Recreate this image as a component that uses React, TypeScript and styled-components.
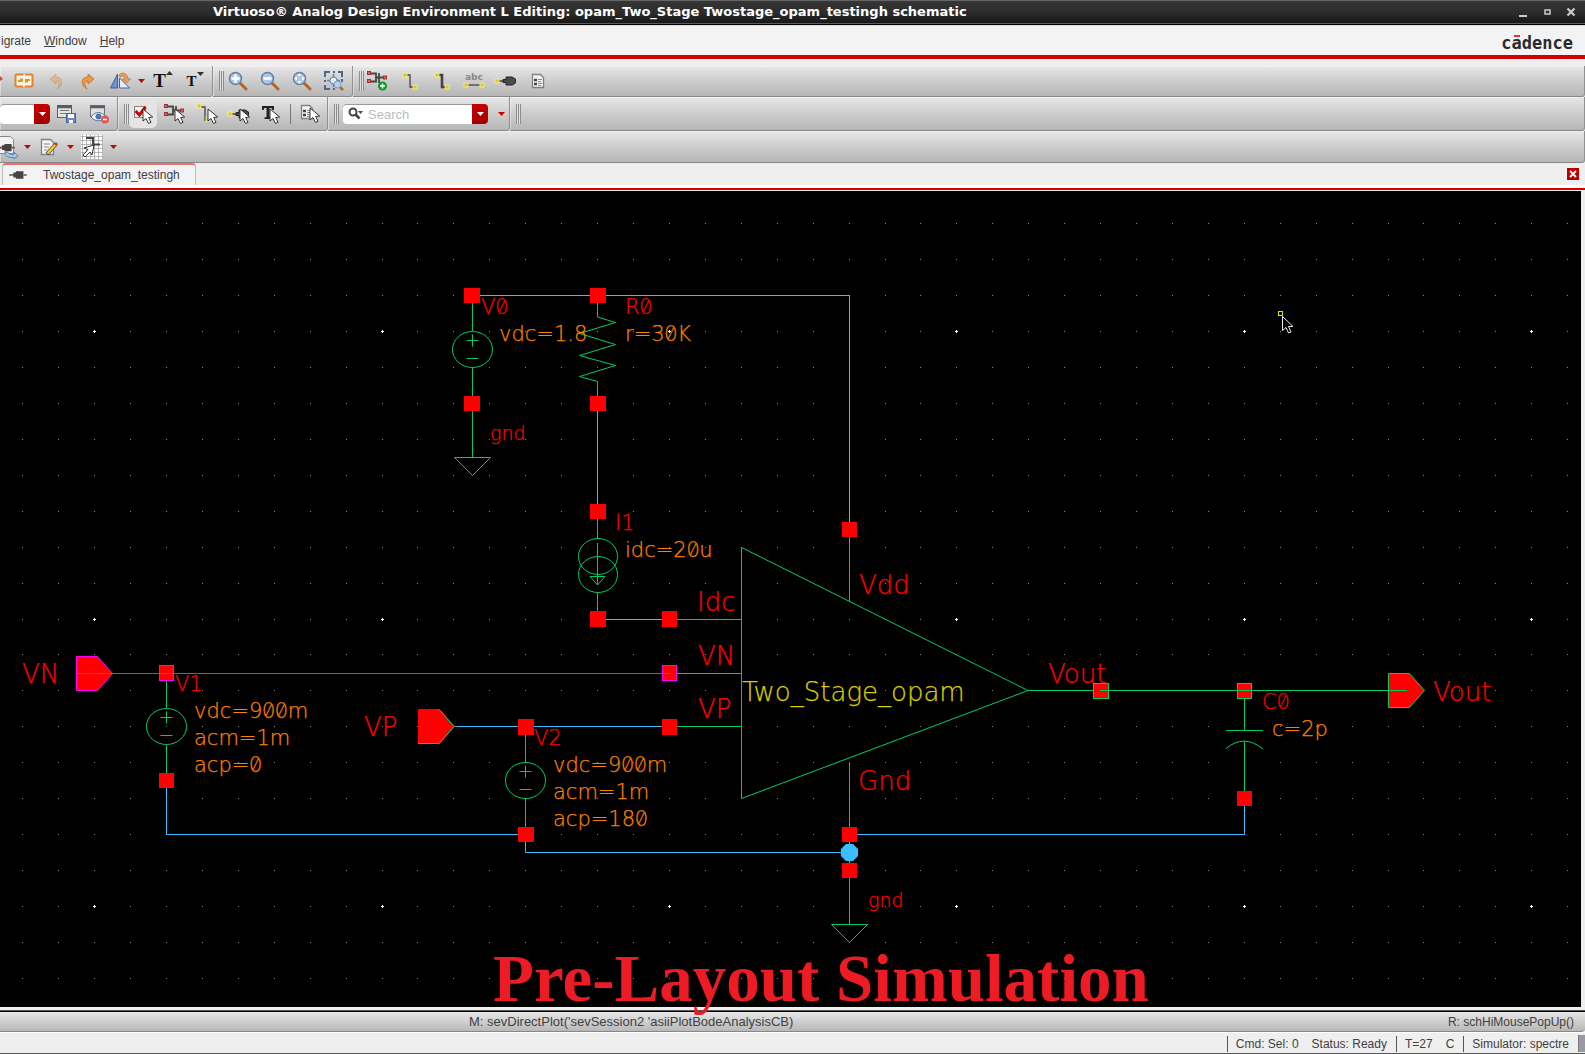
import React from 'react';
import styled, { createGlobalStyle } from 'styled-components';

const GREEN = '#00cc66';
const BLUE = '#39bfff';
const RED = '#ff0000';
const MAGENTA = '#ff00ff';
const ORANGE = '#ff8000';
const YELLOW = '#d9cc00';

const GlobalStyle = createGlobalStyle`
  *, *::before, *::after { box-sizing: border-box; }
  body {
    margin: 0;
    background: #efefef;
    color: #404040;
    font: 12px/16px "Liberation Sans", Arial, sans-serif;
  }
  button, input { font: inherit; color: inherit; margin: 0; padding: 0; border: 0; }
  button { background: none; }
`;

const Window = styled.div`
  display: flex;
  flex-direction: column;
  min-height: 100vh;
  overflow: hidden;
  border-bottom: 1px solid #555;
`;

const TitleBar = styled.header`
  display: flex;
  align-items: center;
  height: 25px;
  padding: 0 8px 1px 213px;
  border-top: 1px solid #666;
  border-bottom: 1px solid #000;
  box-shadow: inset 0 -1px 0 #4a5f80;
  background: linear-gradient(#363636, #2c2c2c 50%, #161616);
`;

const Title = styled.h1`
  flex: 1;
  margin: 0;
  color: #fff;
  font: bold 13px/20px "DejaVu Sans", sans-serif;
  white-space: nowrap;
`;

const WindowButtons = styled.div`
  display: flex;
  gap: 12px;
`;

const WindowButton = styled.button`
  display: flex;
  width: 12px;
  height: 12px;
`;

const MenuBar = styled.nav`
  display: flex;
  align-items: center;
  height: 34px;
  gap: 13px;
  padding: 0 12px 0 1px;
  background: #f3f3f3;
  border-top: 1px solid #ddd;
  border-bottom: 4px solid #d40000;
`;

const MenuItem = styled.button`
  font-size: 12px;
`;

const Logo = styled.div`
  margin-left: auto;
  padding-top: 4px;
  color: #2b2b2b;
  font: bold 17px/24px "DejaVu Sans Mono", monospace;
`;

const LogoMacron = styled.span`
  position: relative;
  &::after {
    content: "";
    position: absolute;
    left: 2px;
    right: 2px;
    top: 2px;
    height: 2px;
    background: #e2343c;
  }
`;

const Toolbars = styled.div`
  padding-top: 7px;
`;

const Toolbar = styled.div<{ $height: number }>`
  display: flex;
  height: ${(p) => p.$height}px;
`;

const Group = styled.div<{ $grow?: boolean; $end?: number }>`
  display: flex;
  align-items: center;
  flex: ${(p) => (p.$grow ? '1 0 auto' : 'none')};
  gap: 6px;
  padding-right: ${(p) => p.$end ?? 4}px;
  border-right: 1px solid #909090;
  border-bottom: 1px solid #888;
  border-radius: 0 0 3px 0;
  box-shadow: inset 1px 1px 0 rgba(255, 255, 255, 0.4);
  background: linear-gradient(#e8e8e8, #cdcdcd 50%, #b6b6b6);
`;

const Grip = styled.span`
  width: 12px;
  height: 20px;
  margin-right: -6px;
  border-left: 6px solid transparent;
  background: repeating-linear-gradient(90deg, #8c8c8c 0 1px, #e2e2e2 1px 2px) content-box;
  padding-right: 1px;
`;

const Rule = styled.span`
  width: 1px;
  height: 20px;
  background: #777;
`;

const ToolButton = styled.button<{ $on?: boolean; $clip?: number }>`
  display: flex;
  align-items: center;
  justify-content: center;
  width: 26px;
  height: 26px;
  margin-left: ${(p) => -(p.$clip ?? 0)}px;
  border-radius: 4px;
  background: ${(p) => (p.$on ? '#e4e4e4' : 'none')};
  box-shadow: ${(p) => (p.$on ? '0 0 0 1px #e4e4e4' : 'none')};
`;

const MenuArrow = styled.button`
  width: 9px;
  height: 16px;
  margin: 0 -2px 0 -2px;
  display: flex;
  align-items: center;
`;

const Field = styled.div<{ $wide?: boolean }>`
  display: flex;
  align-items: center;
  width: ${(p) => (p.$wide ? 145 : 50)}px;
  height: 20px;
  margin: ${(p) => (p.$wide ? '0 -1px 0 3px' : '0 -2px 0 0')};
  padding-left: ${(p) => (p.$wide ? 5 : 0)}px;
  gap: 4px;
  background: #fff;
  border-top: 1px solid #999;
  border-radius: 4px;
`;

const FieldInput = styled.input`
  flex: 1;
  min-width: 0;
  height: 18px;
  background: transparent;
  font-size: 13px;
  outline: none;
  &::placeholder { color: #bdbdbd; opacity: 1; }
`;

const FieldButton = styled.button`
  display: flex;
  align-items: center;
  justify-content: center;
  width: 16px;
  height: 20px;
  border-radius: 0 4px 4px 0;
  background: linear-gradient(#c80000, #a00000);
`;

const TabBar = styled.div`
  display: flex;
  align-items: stretch;
  height: 27px;
  padding: 0 6px 3px 2px;
  border-bottom: 2px solid #d40000;
  background: linear-gradient(#efefef 22px, #fff 22px);
`;

const Tab = styled.button`
  display: flex;
  align-items: center;
  gap: 16px;
  width: 194px;
  padding: 0 0 1px 6px;
  border: 1px solid #bbb;
  border-top: 2px solid #e87070;
  border-bottom: 0;
  border-radius: 4px 4px 0 0;
  background: #f3f3f3;
`;

const TabClose = styled.button`
  display: flex;
  align-self: center;
  margin-left: auto;
  width: 12px;
  height: 12px;
  background: #b80000;
`;

const Stage = styled.main`
  position: relative;
  display: flex;
  flex: 1;
  min-height: 600px;
  border: solid #efefef;
  border-width: 1px 4px 3px 0;
  background: #000;
  box-shadow: inset -1px 0 0 #000, 0 1px 0 #555, 0 2px 0 #000;
  margin-bottom: 2px;
`;

const Drawing = styled.svg`
  flex: 1;
  width: 100%;
  height: 100%;
  min-height: 816px;
`;

const Caption = styled.h2`
  position: absolute;
  left: 493px;
  bottom: -7px;
  margin: 0;
  color: #ed1c24;
  font: bold 67px/72px "Liberation Serif", "Times New Roman", serif;
  white-space: nowrap;
`;

const MessageBar = styled.div`
  display: grid;
  grid-template-columns: 469px 1fr auto;
  align-items: center;
  height: 20px;
  padding: 1px 11px 0 0;
  border-bottom: 1px solid #888;
  border-radius: 0 0 4px 0;
  background: linear-gradient(#e6e6e6, #b8b8b8);
`;

const Message = styled.span`
  grid-column: 2;
  font-size: 13px;
  & + & { grid-column: 3; font-size: 12px; }
`;

const StatusBar = styled.footer`
  display: flex;
  justify-content: flex-end;
  align-items: center;
  height: 21px;
  padding-top: 1px;
  border-top: 1px solid #fff;
`;

const StatusCell = styled.span`
  display: flex;
  gap: 13px;
  padding: 0 9px 0 8px;
  border-left: 1px solid #555;
  white-space: pre;
`;

const SizeGrip = styled.span`
  width: 7px;
  height: 17px;
  background: #99999f;
  border-left: 1px solid #777;
`;

/* ---------- toolbar icons ---------- */

const Icon = ({ children, size = 24 }: { children: React.ReactNode; size?: number }) => (
  <svg width={size} height={size} viewBox="0 0 24 24" fill="none" aria-hidden="true">{children}</svg>
);

const Arrow = ({ color = '#c80000' }: { color?: string }) => (
  <svg width="9" height="6" viewBox="0 0 9 6" aria-hidden="true"><path d="M1 1h7L4.500 5z" fill={color} /></svg>
);

const Pointer = ({ x, y }: { x: number; y: number }) => (
  <path transform={`translate(${x} ${y})`} d="M0 0l0 12 3-2.500 2.500 5 2.500-1.200-2.300-4.800 4-.5z" fill="#fff" stroke="#333" />
);

const SwapIcon = () => (
  <Icon>
    <rect x="3.500" y="5.500" width="17" height="12" rx="1" fill="#fdf3dc" stroke="#dc8434" strokeWidth="2" />
    <path d="M6 12h4V9.500M8 10.500h3M18 11h-4v2.500M13 12.500h3" stroke="#c8a040" strokeWidth="2.200" />
    <path d="M12.500 5l-1 3M12.500 15l-1 3" stroke="#fff" strokeWidth="1.500" />
  </Icon>
);

const CurveIcon = ({ flip, pale }: { flip?: boolean; pale?: boolean }) => (
  <Icon>
    <g transform={flip ? 'translate(24 0) scale(-1 1)' : undefined} opacity={pale ? 0.45 : 1}>
      <path d="M6 10L12 5v3c7 0 8 8 1 12 4-5 2-8-1-8v3z" fill="#ee9a44" stroke="#c06a20" strokeWidth=".8" />
    </g>
  </Icon>
);

const FlipIcon = () => (
  <Icon>
    <path d="M9.500 5v14H2.500z" fill="#6f92cf" stroke="#3f62a0" />
    <path d="M11.500 9v10h10z" fill="#e8eefa" stroke="#3f62a0" />
    <path d="M11 6c4-4 9-1 9 4l2.500 0-4 4-4-4h2.500c0-3-2-4-5-2z" fill="#f0a252" stroke="#b76a26" strokeWidth=".7" />
  </Icon>
);

const GlyphT = styled.span<{ $size: number }>`
  color: #111;
  font: bold ${(p) => p.$size}px/24px "Liberation Serif", serif;
`;

const SizeMark = styled.span`
  display: flex;
  align-self: flex-start;
  padding-top: 3px;
`;

const TextIcon = ({ up }: { up?: boolean }) => (
  <>
    <GlyphT $size={up ? 19 : 15}>T</GlyphT>
    <SizeMark>
      <svg width="7" height="5" viewBox="0 0 7 5" aria-hidden="true">
        <path d={up ? 'M0 4h7L3.500 0z' : 'M0 1h7L3.500 5z'} fill="#333" />
      </svg>
    </SizeMark>
  </>
);

const ZoomIcon = ({ kind }: { kind: 'in' | 'out' | 'fit' }) => (
  <Icon>
    <path d="M14 14l6 6" stroke="#b8641c" strokeWidth="3" strokeLinecap="round" />
    <circle cx="9.500" cy="9.500" r="6" fill="#a9c8e8" stroke="#66809c" strokeWidth="1.500" />
    {kind !== 'fit' && <path d="M5.500 9.500h8" stroke="#fff" strokeWidth="2.500" />}
    {kind === 'in' && <path d="M9.500 5.500v8" stroke="#fff" strokeWidth="2.500" />}
    {kind === 'fit' && <path d="M9.500 4l2 3h-4zM9.500 15l2-3h-4zM4 9.500l3-2v4zM15 9.500l-3-2v4z" fill="#fff" />}
  </Icon>
);

const ZoomAreaIcon = () => (
  <Icon>
    <path d="M3 8V3h5M11 3h2M16 3h4v5M20 10v3M3 11v2M3 16v4h5M11 20h2" stroke="#45698f" strokeWidth="2" />
    <path d="M11.500 5v13M5 11.500h13" stroke="#5c7fa5" strokeWidth="1.500" />
    <circle cx="11.500" cy="11.500" r="3.500" fill="#e6eef7" stroke="#5c7fa5" />
    <path d="M18 18l3 3" stroke="#b8641c" strokeWidth="2.500" />
    <circle cx="15.500" cy="15.500" r="3.500" fill="#b4d2ef" stroke="#7c9cbc" />
  </Icon>
);

const InstanceShape = () => (
  <>
    <path d="M4 4.500h6v8H4M13 4v10M10 8.500h3M13 8.500h7" stroke="#444" strokeWidth="1.800" />
    <rect x="1.500" y="2.500" width="3" height="3" fill="#e06060" stroke="#a03030" />
    <rect x="1.500" y="10.500" width="3" height="3" fill="#e06060" stroke="#a03030" />
    <rect x="17.500" y="7" width="3" height="3" fill="#e06060" stroke="#a03030" />
  </>
);

const InstanceIcon = () => (
  <Icon>
    <InstanceShape />
    <circle cx="16.500" cy="17" r="4.500" fill="#109a20" />
    <path d="M16.500 14.500v5M14 17h5" stroke="#fff" strokeWidth="1.500" />
  </Icon>
);

const Pad = ({ x, y }: { x: number; y: number }) => (
  <rect x={x} y={y} width="4" height="4" fill="#dccb18" stroke="#f8f0a0" strokeWidth=".8" />
);

const WireIcon = ({ bold }: { bold?: boolean }) => (
  <Icon>
    <path d="M8 6h4v12h4" stroke="#444" strokeWidth={bold ? 2.6 : 1.3} />
    <Pad x={5} y={4} />
    <Pad x={15} y={16} />
  </Icon>
);

const NameSvg = styled.svg`
  font: bold 9px "DejaVu Sans", sans-serif;
`;

const NameIcon = () => (
  <NameSvg width="24" height="24" viewBox="0 0 24 24" aria-hidden="true">
    <text x="3" y="11" fill="#888">abc</text>
    <path d="M4 16h16" stroke="#444" strokeWidth="1.300" />
    <Pad x={2} y={14} />
    <Pad x={18} y={14} />
  </NameSvg>
);

const PinShape = () => (
  <>
    <path d="M4 12h8" stroke="#444" strokeWidth="1.500" />
    <path d="M9 10.500h3V8h6l3.500 2v4L18 16h-6v-2.500H9z" fill="#4a4a4a" stroke="#222" />
    <Pad x={1} y={10} />
  </>
);

const PinIcon = () => <Icon><PinShape /></Icon>;

const SheetShape = () => (
  <>
    <path d="M6.500 5.500h8l3 3v10h-11z" fill="#f4f4f4" stroke="#808080" strokeWidth="1.300" />
    <path d="M8 11h3M8 15h3" stroke="#444" strokeWidth="2.600" />
    <path d="M12 10.500h4M12 12.500h3M12 14.500h4M12 16.500h3" stroke="#888" />
  </>
);

const SheetIcon = () => <Icon><SheetShape /></Icon>;

const SaveViewIcon = () => (
  <Icon>
    <rect x="2.500" y="3.500" width="14" height="12" fill="#e4e4e4" stroke="#555f6a" />
    <path d="M2 5h15" stroke="#555f6a" strokeWidth="2.500" />
    <path d="M5 8.500h9M5 11.500h7" stroke="#777" />
    <rect x="11.500" y="11.500" width="9" height="9" fill="#6d86c8" stroke="#4560a0" />
    <path d="M13 12h6v4h-6zM14 18h4v3h-4z" fill="#fff" />
  </Icon>
);

const HideViewIcon = () => (
  <Icon>
    <rect x="3.500" y="3.500" width="14" height="11" fill="#e0e0e0" stroke="#6a727a" />
    <path d="M3 5h15" stroke="#555f6a" strokeWidth="2.500" />
    <path d="M4 15c4-6 11-6 15 0-4 5-11 5-15 0z" fill="#eef4fa" stroke="#56708c" />
    <circle cx="11.500" cy="14.500" r="3" fill="#4a76ac" />
    <circle cx="18" cy="17.500" r="4" fill="#dc5a54" />
    <path d="M16 17.500h4" stroke="#fff" strokeWidth="1.500" />
  </Icon>
);

const SelectIcon = () => (
  <Icon>
    <rect x="3.500" y="4.500" width="11" height="11" fill="#f4f4f4" stroke="#888" />
    <path d="M4.500 9l4 4 6-8" stroke="#c80000" strokeWidth="3" />
    <Pointer x={12} y={7} />
  </Icon>
);

const SelectInstanceIcon = () => <Icon><InstanceShape /><Pointer x={12} y={7} /></Icon>;

const SelectWireIcon = () => (
  <Icon>
    <path d="M6 5h4v13h4" stroke="#444" strokeWidth="1.300" />
    <Pad x={2} y={2} /><Pad x={11} y={15} />
    <Pointer x={13} y={7} />
  </Icon>
);

const SelectPinIcon = () => <Icon><PinShape /><Pointer x={13} y={7} /></Icon>;

const SelectTextIcon = () => (
  <Icon>
    <path d="M3 4h12v4h-1.500l-1-2H10.500v9l2 .6V17h-7v-1.400l2-.6V6H5.500l-1 2H3z" fill="#222" />
    <Pointer x={11} y={7} />
  </Icon>
);

const SelectSheetIcon = () => (
  <Icon>
    <g transform="translate(-3 -2)"><SheetShape /></g>
    <Pointer x={12} y={6} />
  </Icon>
);

const PlugShape = () => (
  <>
    <path d="M0 12h6M17 12h4" stroke="#555" strokeWidth="2" />
    <path d="M5 9h3V7.500h9v9H8V15H5z" fill="#444" />
  </>
);

const ExportIcon = () => (
  <Icon>
    <path d="M4.500 1.500h12l3 3v14h-15z" fill="#f4f4f4" stroke="#888" />
    <g transform="translate(4 3) scale(.8)"><PlugShape /></g>
    <path d="M4 12.500h4M17 12.500h3" stroke="#c84040" strokeWidth="1.500" />
    <path d="M11 17h3c0 2 3 2.500 6 2.500V17l4 4-4 3v-1.500c-6 0-9-1-9-5.500z" fill="#a8c8ec" stroke="#5a80b0" />
  </Icon>
);

const EditIcon = () => (
  <Icon>
    <path d="M4.500 4.500h9l3 3v12h-12z" fill="#f4f4f4" stroke="#808080" strokeWidth="1.300" />
    <path d="M7 9h6M7 12h5M7 15h3" stroke="#888" />
    <path d="M10 19l9-10" stroke="#444" strokeWidth="4" />
    <path d="M10.500 18.500l8-9" stroke="#f4d020" strokeWidth="2.600" />
    <path d="M18 10l2-2" stroke="#d84040" strokeWidth="3" />
  </Icon>
);

const SnapIcon = () => (
  <Icon>
    <rect x="1" y="0" width="22" height="24" fill="#fff" />
    <path d="M2.500 0v24M6.500 0v24M10.500 0v24M14.500 0v24M18.500 0v24M22.500 0v24M1 1.500h22M1 5.500h22M1 9.500h22M1 13.500h22M1 17.500h22M1 21.500h22" stroke="#999" strokeWidth=".7" />
    <path d="M6 3h7v6M13 5v9M13 9.500h7" stroke="#444" strokeWidth="2" />
    <path d="M14 10L4 13l4 1.500L3 20l2 2 5-5 2 3z" fill="#fff" stroke="#333" />
  </Icon>
);

const MagnifierIcon = () => (
  <svg width="16" height="14" viewBox="0 0 16 14" fill="none" aria-hidden="true">
    <circle cx="5" cy="5" r="3.500" stroke="#444" strokeWidth="2" />
    <path d="M7.500 7.500l4 4" stroke="#444" strokeWidth="2.500" />
    <path d="M10 4h5l-2.500 3z" fill="#444" />
  </svg>
);

/* ---------- schematic ---------- */

const Wire = styled.path<{ $c: string }>`
  fill: none;
  stroke: ${(p) => p.$c};
  stroke-width: 1px;
`;

const Label = styled.text<{ $c: string; $size?: number }>`
  fill: ${(p) => p.$c};
  stroke: ${(p) => p.$c};
  stroke-width: 0.25;
  font-family: "DejaVu Sans Light", "DejaVu Sans", sans-serif;
  font-size: ${(p) => p.$size ?? 21}px;
  font-weight: 200;
`;

const SlashedZero = styled.tspan`
  font-family: "Inter", sans-serif;
  font-feature-settings: "zero" 1;
`;

const COLUMNS = 120;
const ROWS = 60;
const PITCH = 35.93;

const GridDots = () => {
  const dots: React.ReactNode[] = [];
  for (let row = 0; row < ROWS; row++) {
    for (let col = 0; col < COLUMNS; col++) {
      const x = Math.round(22.2 + col * PITCH);
      const y = Math.round(223.3 + row * PITCH);
      const major = col % 8 === 2 && row % 8 === 3;
      dots.push(
        major
          ? <path key={`${row}-${col}`} d={`M${x - 1} ${y}h3v1h-3zM${x} ${y - 1}h1v3h-1z`} fill="#fff" />
          : <rect key={`${row}-${col}`} x={x} y={y} width="1" height="1" fill="#82828c" />,
      );
    }
  }
  return <g shapeRendering="crispEdges">{dots}</g>;
};

const Terminal = ({ x, y, h = 15, w = 15, edge }: { x: number; y: number; h?: number; w?: number; edge?: string }) => (
  <>
    <rect x={x} y={y} width={w} height={h} fill={RED} />
    {edge && <rect x={x + 0.5} y={y + 0.5} width={w - 1} height={h - 1} fill="none" stroke={edge} />}
  </>
);

const Source = ({ x, y }: { x: number; y: number }) => (
  <g>
    <ellipse cx={x} cy={y} rx="20" ry="18" fill="none" stroke={GREEN} />
    <Wire $c={GREEN} d={`M${x - 6} ${y - 9}h12M${x} ${y - 15}v12M${x - 6} ${y + 9}h12`} />
  </g>
);

const Ground = ({ x, y }: { x: number; y: number }) => (
  <Wire $c={GREEN} d={`M${x - 18} ${y}h36l-18 18z`} />
);

const Port = ({ x, y, edge }: { x: number; y: number; edge: string }) => (
  <path d={`M${x} ${y - 17}h21l15 17-15 17h-21z`} fill={RED} stroke={edge} />
);

const labels: Array<[number, number, string, string, number?]> = [
  [481, 314, 'V0', RED], [625, 314, 'R0', RED],
  [499, 341, 'vdc=1.8', ORANGE], [625, 341, 'r=30K', ORANGE],
  [490, 440, 'gnd', RED, 19], [615, 530, 'I1', RED],
  [625, 557, 'idc=20u', ORANGE],
  [697, 611, 'Idc', RED, 26], [698, 665, 'VN', RED, 26], [698, 718, 'VP', RED, 26],
  [742, 701, 'Two_Stage_opam', YELLOW, 26],
  [859, 594, 'Vdd', RED, 26], [1048, 683, 'Vout', RED, 26], [858, 790, 'Gnd', RED, 26],
  [868, 907, 'gnd', RED, 19],
  [1262, 709, 'C0', RED], [1272, 736, 'c=2p', ORANGE],
  [1433, 701, 'Vout', RED, 26],
  [22, 683, 'VN', RED, 26], [175, 691, 'V1', RED],
  [194, 718, 'vdc=900m', ORANGE], [194, 745, 'acm=1m', ORANGE], [194, 772, 'acp=0', ORANGE],
  [364, 736, 'VP', RED, 26], [534, 745, 'V2', RED],
  [553, 772, 'vdc=900m', ORANGE], [553, 799, 'acm=1m', ORANGE], [553, 826, 'acp=180', ORANGE],
];

const Schematic = () => (
  <Drawing role="img" aria-label="Two stage op-amp test bench">
    <g transform="translate(0 -191)">
      <GridDots />
      <Wire $c={BLUE} d="M472 295.500H849.500V530M597.500 400V510M600 619.500H670M454 726.500H670" />
      <Wire $c={BLUE} d="M166.500 780V834.500H525.500V852.500H849.500M849.500 834V870M849.500 834.500H1244.500V800" />

      <Wire $c={GREEN} d="M472.500 295V331M472.500 367V457" />
      <Source x={472.5} y={349.5} />
      <Ground x={472.5} y={457.5} />
      <Wire $c={GREEN} d="M597.500 303V317L615.500 322.500L579.500 333.500L615.500 344.500L579.500 355.500L615.500 365.500L579.500 376.500L597.500 381.500V396" />

      <Wire $c={GREEN} d="M597.500 519V538M597.500 543V585M597.500 593V611M590 576.500h15l-7.500 8.500z" />
      <ellipse cx="598" cy="556.500" rx="19.500" ry="18" fill="none" stroke={GREEN} />
      <ellipse cx="598" cy="574.500" rx="19.500" ry="18" fill="none" stroke={GREEN} />

      <Wire $c={GREEN} d="M741.500 547.500V798.500L1028 690.500ZM677 619.500H741M677 673.500H741M677 726.500H741M849.500 537V601M849.500 762V827M849.500 878V924" />
      <Ground x={849.5} y={924.5} />

      <Wire $c={GREEN} d="M166.500 681V708M166.500 745V773M525.500 735V762M525.500 798V827" />
      <Source x={166.5} y={726.5} />
      <Source x={525.5} y={780.5} />

      <Wire $c={GREEN} d="M1244.500 699V730M1226 730.500H1263M1226 748.500Q1244 733.500 1263 749M1244.500 741V791" />

      <Terminal x={464} y={288} w={16} /><Terminal x={590} y={288} w={16} />
      <Terminal x={464} y={396} w={16} /><Terminal x={590} y={396} w={16} />
      <Terminal x={590} y={504} w={16} /><Terminal x={590} y={611} w={16} h={16} />
      <Terminal x={662} y={611} h={16} /><Terminal x={662} y={719} h={16} />
      <Terminal x={842} y={522} /><Terminal x={842} y={827} /><Terminal x={842} y={863} />
      <Terminal x={159} y={773} /><Terminal x={518} y={719} w={16} h={16} /><Terminal x={518} y={827} w={16} />
      <Terminal x={1237} y={791} />
      <Terminal x={662} y={665} h={16} edge={MAGENTA} /><Terminal x={159} y={665} h={16} edge={MAGENTA} />
      <Terminal x={1093} y={683} w={16} h={16} edge={GREEN} /><Terminal x={1237} y={683} h={16} edge={GREEN} />
      <path d="M846 844h7l5 5v7l-5 5h-7l-5-5v-7z" fill={BLUE} />

      <Port x={76.5} y={673.5} edge={MAGENTA} />
      <Port x={418.5} y={726.5} edge={RED} />
      <Wire $c={GREEN} d="M418 743.500h21l15-17-15-17" />
      <Port x={1388.5} y={690.5} edge={GREEN} />
      <Wire $c={MAGENTA} d="M76 673.500H670" />
      <Wire $c={GREEN} d="M1028 690.500H1093M1100 690.500H1407" />

      {labels.map(([x, y, text, color, size]) => (
        <Label key={`${x}-${y}`} x={x} y={y} $c={color} $size={size}>
          {text.split(/(0+)/).map((part, i) => (part.startsWith('0') ? <SlashedZero key={i}>{part}</SlashedZero> : part))}
        </Label>
      ))}

      <rect x="1278.500" y="311.500" width="4" height="4" fill="#000" stroke="#e8e000" />
      <path d="M1282.500 316.500v14l3.500-3 2.500 5.500 2.500-1-2.500-5.500h4.500z" fill="#000" stroke="#eee" />
    </g>
  </Drawing>
);

export default function App() {
  return (
    <Window>
      <GlobalStyle />
      <TitleBar>
        <Title>Virtuoso® Analog Design Environment L Editing: opam_Two_Stage Twostage_opam_testingh schematic</Title>
        <WindowButtons>
          <WindowButton aria-label="Minimize"><svg width="12" height="12"><path d="M2 9h8v2H2z" fill="#ccc" /></svg></WindowButton>
          <WindowButton aria-label="Maximize"><svg width="12" height="12"><path d="M4 4h5v4H4z" fill="none" stroke="#ccc" strokeWidth="1.500" /></svg></WindowButton>
          <WindowButton aria-label="Close"><svg width="12" height="12"><path d="M2.500 2.500l7 7M9.500 2.500l-7 7" stroke="#ccc" strokeWidth="2.200" /></svg></WindowButton>
        </WindowButtons>
      </TitleBar>

      <MenuBar>
        <MenuItem>igrate</MenuItem>
        <MenuItem><u>W</u>indow</MenuItem>
        <MenuItem><u>H</u>elp</MenuItem>
        <Logo>c<LogoMacron>a</LogoMacron>dence</Logo>
      </MenuBar>

      <Toolbars>
        <Toolbar $height={31}>
          <Group>
            <ToolButton $clip={21} aria-label="Delete"><Icon><path d="M14 12l6-5 3 3-6 4z" fill="#c84848" /></Icon></ToolButton>
            <ToolButton aria-label="Repeat"><SwapIcon /></ToolButton>
            <ToolButton aria-label="Undo"><CurveIcon pale /></ToolButton>
            <ToolButton aria-label="Redo"><CurveIcon flip /></ToolButton>
            <ToolButton aria-label="Rotate"><FlipIcon /></ToolButton>
            <MenuArrow aria-label="Rotate options"><Arrow /></MenuArrow>
            <ToolButton aria-label="Larger text"><TextIcon up /></ToolButton>
            <ToolButton aria-label="Smaller text"><TextIcon /></ToolButton>
          </Group>
          <Group $end={5}>
            <Grip />
            <ToolButton aria-label="Zoom in"><ZoomIcon kind="in" /></ToolButton>
            <ToolButton aria-label="Zoom out"><ZoomIcon kind="out" /></ToolButton>
            <ToolButton aria-label="Zoom fit"><ZoomIcon kind="fit" /></ToolButton>
            <ToolButton aria-label="Zoom area"><ZoomAreaIcon /></ToolButton>
          </Group>
          <Group $grow>
            <Grip />
            <ToolButton aria-label="Create instance"><InstanceIcon /></ToolButton>
            <ToolButton aria-label="Create wire"><WireIcon /></ToolButton>
            <ToolButton aria-label="Create wide wire"><WireIcon bold /></ToolButton>
            <ToolButton aria-label="Create wire name"><NameIcon /></ToolButton>
            <ToolButton aria-label="Create pin"><PinIcon /></ToolButton>
            <ToolButton aria-label="Create note"><SheetIcon /></ToolButton>
          </Group>
        </Toolbar>

        <Toolbar $height={34}>
          <Group $end={5}>
            <Field>
              <FieldInput aria-label="Workspace" />
              <FieldButton aria-label="Choose workspace"><Arrow color="#fff" /></FieldButton>
            </Field>
            <ToolButton aria-label="Save workspace"><SaveViewIcon /></ToolButton>
            <ToolButton aria-label="Hide assistants"><HideViewIcon /></ToolButton>
          </Group>
          <Group>
            <Grip />
            <ToolButton $on aria-label="Full selection"><SelectIcon /></ToolButton>
            <ToolButton aria-label="Select instances"><SelectInstanceIcon /></ToolButton>
            <ToolButton aria-label="Select wires"><SelectWireIcon /></ToolButton>
            <ToolButton aria-label="Select pins"><SelectPinIcon /></ToolButton>
            <ToolButton aria-label="Select labels"><SelectTextIcon /></ToolButton>
            <Rule />
            <ToolButton aria-label="Select by property"><SelectSheetIcon /></ToolButton>
          </Group>
          <Group $end={5}>
            <Grip />
            <Field $wide>
              <MagnifierIcon />
              <FieldInput aria-label="Search" placeholder="Search" />
              <FieldButton aria-label="Search history"><Arrow color="#fff" /></FieldButton>
            </Field>
            <span />
            <MenuArrow aria-label="Search options"><Arrow /></MenuArrow>
          </Group>
          <Group $grow><Grip /></Group>
        </Toolbar>

        <Toolbar $height={32}>
          <Group $grow>
            <ToolButton $clip={7} aria-label="Check and save"><ExportIcon /></ToolButton>
            <MenuArrow aria-label="Check options"><Arrow /></MenuArrow>
            <ToolButton aria-label="Edit"><EditIcon /></ToolButton>
            <MenuArrow aria-label="Edit options"><Arrow /></MenuArrow>
            <ToolButton aria-label="Snap"><SnapIcon /></ToolButton>
            <MenuArrow aria-label="Snap options"><Arrow /></MenuArrow>
          </Group>
        </Toolbar>
      </Toolbars>

      <TabBar>
        <Tab>
          <svg width="18" height="20" viewBox="0 0 21 24" fill="none" aria-hidden="true"><PlugShape /></svg>
          Twostage_opam_testingh
        </Tab>
        <TabClose aria-label="Close tab">
          <svg width="12" height="12"><path d="M3 3l6 6M9 3l-6 6" stroke="#fff" strokeWidth="1.800" /></svg>
        </TabClose>
      </TabBar>

      <Stage>
        <Schematic />
        <Caption>Pre-Layout Simulation</Caption>
      </Stage>

      <MessageBar>
        <Message>M: sevDirectPlot('sevSession2 'asiiPlotBodeAnalysisCB)</Message>
        <Message>R: schHiMousePopUp()</Message>
      </MessageBar>
      <StatusBar>
        <StatusCell><span>Cmd: Sel: 0</span><span>Status: Ready</span></StatusCell>
        <StatusCell><span>T=27</span><span>C</span></StatusCell>
        <StatusCell>Simulator: spectre</StatusCell>
        <SizeGrip />
      </StatusBar>
    </Window>
  );
}
